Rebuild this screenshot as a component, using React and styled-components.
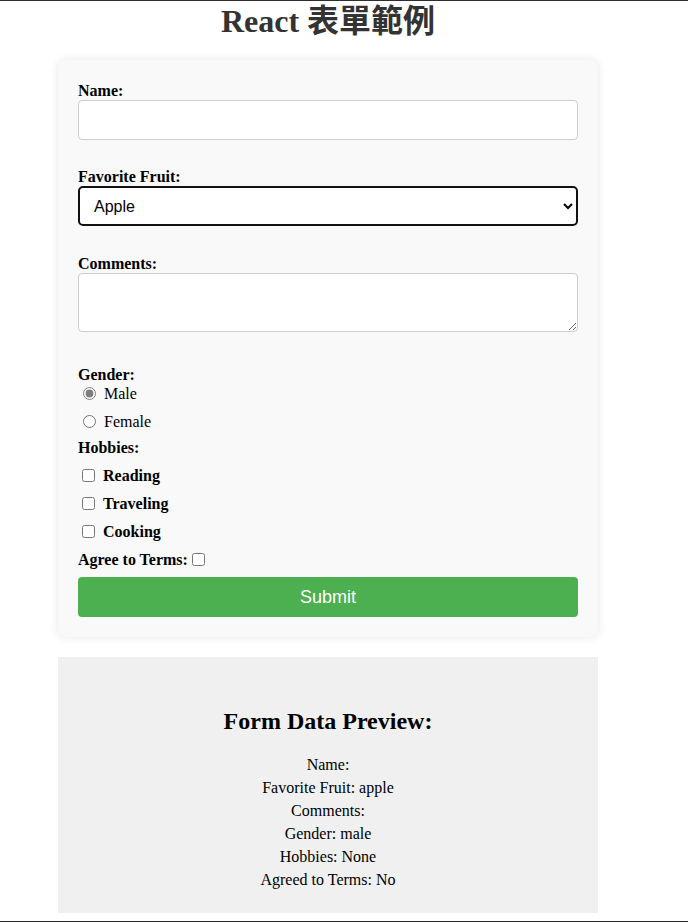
import React, { useState } from 'react';
import styled, { createGlobalStyle } from 'styled-components';

const GlobalStyle = createGlobalStyle`
  html, body {
    margin: 0;
    padding: 0;
    background: #ffffff;
  }
  body {
    font-family: "Liberation Serif", "Noto Sans CJK TC", serif;
    font-size: 16px;
    color: #000;
  }
`;

//Styles
const Page = styled.div`
  min-height: 100vh;
  box-sizing: border-box;
  border-top: 1px solid #2e2e2e;
  border-bottom: 1px solid #2e2e2e;
  padding-left: 58px;
`;

const Container = styled.div`
  width: 540px;
`;

const Title = styled.h1`
  margin: 2px 0 20px;
  font-size: 32px;
  line-height: 37px;
  font-weight: bold;
  color: #333;
  text-align: center;
  font-family: "Liberation Serif", "Noto Sans CJK TC", serif;
`;

const Form = styled.form`
  background-color: #f9f9f9;
  border-radius: 8px;
  box-shadow: 0 0 10px rgba(0, 0, 0, 0.1);
  padding: 20px;
  display: flex;
  flex-direction: column;
`;

const Group = styled.div`
  display: flex;
  flex-direction: column;
  margin-bottom: ${props => props.$gap || 0}px;
`;

const Label = styled.label`
  display: block;
  font-weight: bold;
  line-height: 19px;
  padding-top: 1px;
  margin-top: ${props => props.$top || 0}px;
`;

const TextInput = styled.input`
  box-sizing: border-box;
  width: 100%;
  height: 40px;
  padding: 10px;
  margin: 0;
  border: 1px solid #ccc;
  border-radius: 4px;
  background: #fff;
  font-size: 16px;
  font-family: "Liberation Sans", Arial, sans-serif;
`;

const Select = styled.select`
  box-sizing: border-box;
  width: 100%;
  height: 40px;
  padding: 0 6px 0 10px;
  margin: 0;
  border: 2px solid #111;
  border-radius: 5px;
  background: #fff;
  color: #000;
  font-size: 16px;
  font-family: "Liberation Sans", Arial, sans-serif;
`;

const TextArea = styled.textarea`
  display: block;
  box-sizing: border-box;
  width: 100%;
  height: 59px;
  padding: 10px;
  margin: 0;
  border: 1px solid #ccc;
  border-radius: 4px;
  background: #fff;
  font-size: 16px;
  font-family: "Liberation Sans", Arial, sans-serif;
`;

const Option = styled.label`
  display: flex;
  align-items: center;
  box-sizing: border-box;
  height: 20px;
  padding-top: ${props => (props.$bold ? 2 : 0)}px;
  margin-top: ${props => props.$top || 0}px;
  font-weight: ${props => (props.$bold ? 'bold' : 'normal')};
`;

const Radio = styled.input.attrs({ type: 'radio' })`
  width: 13px;
  height: 13px;
  margin: -2px 8px 0 5px;
  accent-color: #7d7d7d;
`;

const Check = styled.input.attrs({ type: 'checkbox' })`
  width: 13px;
  height: 13px;
  margin: -2px 8px 0 4px;
`;

const TermsRow = styled.label`
  display: flex;
  align-items: center;
  box-sizing: border-box;
  height: 20px;
  padding-top: 2px;
  margin-top: 8px;
  font-weight: bold;
`;

const TermsCheck = styled.input.attrs({ type: 'checkbox' })`
  width: 13px;
  height: 13px;
  margin: -2px 0 0 4px;
`;

const Button = styled.button`
  margin-top: 8px;
  height: 40px;
  border: none;
  border-radius: 4px;
  background-color: #4caf50;
  color: #ffffff;
  font-size: 18px;
  font-family: "Liberation Sans", Arial, sans-serif;
  cursor: pointer;
`;

const Preview = styled.div`
  margin-top: 20px;
  background-color: #f0f0f0;
  padding: 50px 20px 22px;
  text-align: center;
`;

const PreviewTitle = styled.h2`
  margin: 0 0 18px;
  font-size: 24px;
  line-height: 28px;
  font-weight: bold;
`;

const PreviewLine = styled.p`
  margin: 0;
  line-height: 23px;
`;
//styles end

const hobbyList = ['Reading', 'Traveling', 'Cooking'];

const App = () => {
  const [values, setValues] = useState({
    name: '',
    fruit: 'apple',
    comments: '',
    gender: 'male',
    hobbies: [],
    agree: false
  });

  const handleChange = event => {
    setValues({
      ...values,
      [event.target.name]: event.target.value
    });
  };

  const toggleHobby = hobby => {
    const has = values.hobbies.includes(hobby);
    setValues({
      ...values,
      hobbies: has
        ? values.hobbies.filter(h => h !== hobby)
        : [...values.hobbies, hobby]
    });
  };

  return (
    <Page>
      <GlobalStyle />
      <Container>
        <Title>React 表單範例</Title>
        <Form
          onSubmit={event => {
            event.preventDefault();
            console.log(values);
          }}
        >
          <Group $gap={26}>
            <Label htmlFor="name">Name:</Label>
            <TextInput
              id="name"
              type="text"
              name="name"
              value={values.name}
              onChange={handleChange}
            />
          </Group>
          <Group $gap={27}>
            <Label htmlFor="fruit">Favorite Fruit:</Label>
            <Select
              id="fruit"
              name="fruit"
              value={values.fruit}
              onChange={handleChange}
            >
              <option value="apple">Apple</option>
              <option value="banana">Banana</option>
              <option value="orange">Orange</option>
            </Select>
          </Group>
          <Group $gap={32}>
            <Label htmlFor="comments">Comments:</Label>
            <TextArea
              id="comments"
              name="comments"
              value={values.comments}
              onChange={handleChange}
            />
          </Group>
          <Group>
            <Label>Gender:</Label>
            <Option>
              <Radio
                name="gender"
                value="male"
                checked={values.gender === 'male'}
                onChange={handleChange}
              />
              Male
            </Option>
            <Option $top={8}>
              <Radio
                name="gender"
                value="female"
                checked={values.gender === 'female'}
                onChange={handleChange}
              />
              Female
            </Option>
          </Group>
          <Group>
            <Label $top={5}>Hobbies:</Label>
            {hobbyList.map(hobby => (
              <Option key={hobby} $top={8} $bold>
                <Check
                  checked={values.hobbies.includes(hobby)}
                  onChange={() => toggleHobby(hobby)}
                />
                {hobby}
              </Option>
            ))}
          </Group>
          <TermsRow>
            Agree to Terms:
            <TermsCheck
              checked={values.agree}
              onChange={() => setValues({ ...values, agree: !values.agree })}
            />
          </TermsRow>
          <Button type="submit">Submit</Button>
        </Form>
        <Preview>
          <PreviewTitle>Form Data Preview:</PreviewTitle>
          <PreviewLine>Name: {values.name}</PreviewLine>
          <PreviewLine>Favorite Fruit: {values.fruit}</PreviewLine>
          <PreviewLine>Comments: {values.comments}</PreviewLine>
          <PreviewLine>Gender: {values.gender}</PreviewLine>
          <PreviewLine>
            Hobbies: {values.hobbies.length ? values.hobbies.join(', ') : 'None'}
          </PreviewLine>
          <PreviewLine>Agreed to Terms: {values.agree ? 'Yes' : 'No'}</PreviewLine>
        </Preview>
      </Container>
    </Page>
  );
};

export default App;
